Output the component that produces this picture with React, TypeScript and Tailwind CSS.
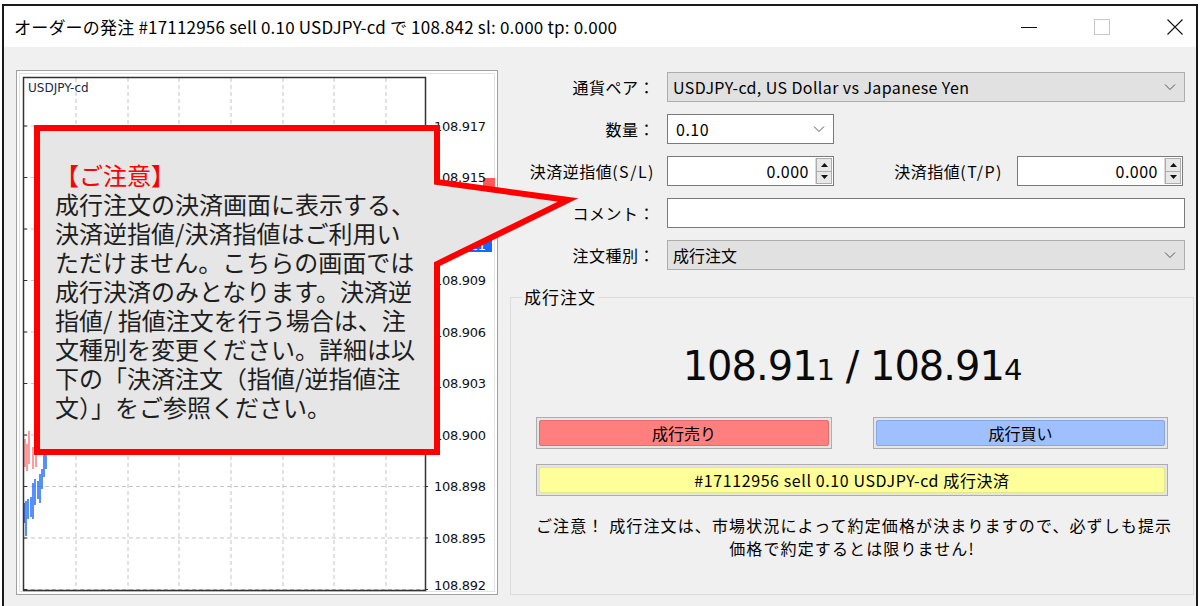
import React from "react";

const levels = [
  "108.917",
  "108.915",
  "108.912",
  "108.909",
  "108.906",
  "108.903",
  "108.900",
  "108.898",
  "108.895",
  "108.892",
];
const gridX = [59, 111, 162, 214, 266, 317, 369];

// candles at the far left edge of the chart (x, y1, y2, colour)
const bars: [number, number, number, string][] = [
  [8, 368, 396, "#ff7a7a"],
  [10, 373, 400, "#ff7a7a"],
  [12, 360, 393, "#ff7a7a"],
  [16, 376, 398, "#ff7a7a"],
  [19, 378, 396, "#ff7a7a"],
  [7, 432, 452, "#0a3fd1"],
  [9, 430, 465, "#1e6bff"],
  [11, 428, 448, "#1e6bff"],
  [14, 426, 446, "#1e6bff"],
  [16, 412, 448, "#1e6bff"],
  [18, 408, 434, "#1e6bff"],
  [21, 410, 428, "#1e6bff"],
  [23, 403, 432, "#1e6bff"],
  [25, 398, 418, "#1e6bff"],
  [27, 384, 406, "#1e6bff"],
  [29, 372, 398, "#1e6bff"],
];

function Chart() {
  return (
    <div className="w-[482px] h-[525px] border border-[#a0a0a0] bg-white shrink-0">
      <svg width="480" height="523" className="block">
        <rect x="2.5" y="2.5" width="475" height="518" fill="none" stroke="#e3e3e3" />
        {levels.map((_, i) => {
          const y = 55 + i * 51.5;
          return (
            <g key={i}>
              <line x1="7" x2="408" y1={y} y2={y} stroke="#c4c4c4" strokeDasharray="4 3" />
              <line x1="6.5" x2="10" y1={y} y2={y} stroke="#333" />
              <line x1="408" x2="411" y1={y} y2={y} stroke="#333" />
            </g>
          );
        })}
        {gridX.map((x) => (
          <line key={x} x1={x} x2={x} y1="7" y2="519" stroke="#c4c4c4" strokeDasharray="4 3" />
        ))}
        {bars.map(([x, a, b, c], i) => (
          <line key={i} x1={x} x2={x} y1={a} y2={b} stroke={c} strokeWidth="1.5" />
        ))}
        <rect x="6.5" y="6.5" width="402" height="513" fill="none" stroke="#333" strokeWidth="1.5" />
        <text x="11" y="21" fontSize="12" fill="#1c2a48" fontFamily="DejaVu Sans, sans-serif">
          USDJPY-cd
        </text>
        <rect x="466" y="107" width="12" height="12" fill="#ff5a5a" />
        <rect x="415" y="167" width="60" height="14" fill="#1a66ff" />
        {levels.map((l, i) => {
          const y = i === 9 ? 519 : 59.5 + i * 51.5;
          return (
            <text
              key={l}
              x="417"
              y={y}
              fontSize="13"
              fill="#111"
              fontFamily="DejaVu Sans, sans-serif"
              letterSpacing="-0.3"
            >
              {l}
            </text>
          );
        })}
        <text x="417" y="178.5" fontSize="13" fill="#fff" fontFamily="DejaVu Sans, sans-serif" letterSpacing="-0.3">
          108.911
        </text>
      </svg>
    </div>
  );
}

function Chevron() {
  return (
    <svg width="12" height="8" viewBox="0 0 12 8" className="shrink-0">
      <polyline points="1,1.5 6,6.5 11,1.5" fill="none" stroke="#555" strokeWidth="1" />
    </svg>
  );
}

function Spin() {
  return (
    <div className="flex flex-col w-[17px] h-full border-l border-[#d9d9d9]">
      <div className="flex-1 bg-[#e8e8e8] border border-[#adadad] flex items-center justify-center">
        <svg width="7" height="4" viewBox="0 0 7 4">
          <polygon points="0,4 3.5,0 7,4" fill="#111" />
        </svg>
      </div>
      <div className="flex-1 bg-[#e8e8e8] border border-t-0 border-[#adadad] flex items-center justify-center">
        <svg width="7" height="4" viewBox="0 0 7 4">
          <polygon points="0,0 3.5,4 7,0" fill="#111" />
        </svg>
      </div>
    </div>
  );
}

function Label({ children, w = "w-[145px]" }: { children: React.ReactNode; w?: string }) {
  return (
    <div className={`${w} text-right text-[16px] tracking-[0.5px] text-black shrink-0 whitespace-nowrap`}>
      {children}
    </div>
  );
}

function Form() {
  return (
    <div className="w-[682px] pt-[2px] flex flex-col">
      <div className="flex items-center h-[30px] mb-[12px]">
        <Label>通貨ペア：</Label>
        <div className="ml-[12px] w-[518px] h-full bg-[#e1e1e1] border border-[#adadad] flex items-center pl-[5px] pr-[8px] text-[16px] tracking-[0.4px]">
          <span className="flex-1">USDJPY-cd, US Dollar vs Japanese Yen</span>
          <Chevron />
        </div>
      </div>
      <div className="flex items-center h-[30px] mb-[12px]">
        <Label>数量：</Label>
        <div className="ml-[12px] w-[167px] h-full bg-white border border-[#7a7a7a] flex items-center pl-[8px] pr-[8px] text-[16px] tracking-[0.5px]">
          <span className="flex-1">0.10</span>
          <Chevron />
        </div>
      </div>
      <div className="flex items-center h-[30px] mb-[12px]">
        <Label>
          決済逆指値<span className="tracking-[1.5px]">(S/L)</span>
        </Label>
        <div className="ml-[12px] w-[167px] h-full bg-white border border-[#7a7a7a] flex items-stretch text-[16px] tracking-[0.5px]">
          <span className="flex-1 text-right pr-[6px] self-center">0.000</span>
          <div className="py-[1px] pr-[1px]">
            <Spin />
          </div>
        </div>
        <Label w="w-[169px]">
          決済指値<span className="tracking-[1.5px]">(T/P)</span>
        </Label>
        <div className="ml-[14px] w-[166px] h-full bg-white border border-[#7a7a7a] flex items-stretch text-[16px] tracking-[0.5px]">
          <span className="flex-1 text-right pr-[6px] self-center">0.000</span>
          <div className="py-[1px] pr-[1px]">
            <Spin />
          </div>
        </div>
      </div>
      <div className="flex items-center h-[30px] mb-[12px]">
        <Label>コメント：</Label>
        <div className="ml-[12px] w-[518px] h-full bg-white border border-[#7a7a7a]" />
      </div>
      <div className="flex items-center h-[30px]">
        <Label>注文種別：</Label>
        <div className="ml-[12px] w-[518px] h-full bg-[#e1e1e1] border border-[#adadad] flex items-center pl-[5px] pr-[8px] text-[16px]">
          <span className="flex-1">成行注文</span>
          <Chevron />
        </div>
      </div>

      <fieldset className="mt-[15px] w-[682px] h-[310px] border border-[#dcdcdc] px-[25px]">
        <legend className="ml-[-14px] px-[2px] text-[17px] leading-[24px] tracking-[1px] text-black">成行注文</legend>
        <div className="mt-[34px] h-[46px] flex items-baseline justify-center text-[#0a0a0a] font-['DejaVu_Sans',sans-serif] tracking-[-1px]">
          <span className="text-[40px] leading-[46px]">108.91</span>
          <span className="text-[29px]">1</span>
          <span className="text-[40px] leading-[46px]">&nbsp;/&nbsp;108.91</span>
          <span className="text-[29px]">4</span>
        </div>
        <div className="mt-[28px] flex gap-[41px]">
          <div className="w-[296px] h-[32px] border border-[#adadad] bg-[#e5e5e5] p-[2px]">
            <div className="h-full rounded-[2px] bg-[#ff7f7f] border border-[#e86a6a] flex items-center justify-center text-[16px] text-black">
              成行売り
            </div>
          </div>
          <div className="w-[295px] h-[32px] border border-[#adadad] bg-[#e5e5e5] p-[2px]">
            <div className="h-full rounded-[2px] bg-[#a0bfff] border border-[#86a6ea] flex items-center justify-center text-[16px] text-black">
              成行買い
            </div>
          </div>
        </div>
        <div className="mt-[15px] w-[632px] h-[32px] border border-[#adadad] bg-[#e5e5e5] p-[2px]">
          <div className="h-full rounded-[2px] bg-[#ffff99] border border-[#e6e68a] flex items-center justify-center text-[16px] tracking-[0.6px] text-black">
            #17112956 sell 0.10 USDJPY-cd 成行決済
          </div>
        </div>
        <div className="mt-[18px] w-[632px] text-center text-[16px] leading-[23px] tracking-[0.07em] text-black whitespace-nowrap">
          ご注意！ 成行注文は、市場状況によって約定価格が決まりますので、必ずしも提示
          <br />
          価格で約定するとは限りません!
        </div>
      </fieldset>
    </div>
  );
}

function TitleBar() {
  return (
    <div className="h-[41px] bg-white flex items-center pl-[10px] shrink-0">
      <div className="flex-1 text-[17px] tracking-[0.2px] text-black whitespace-nowrap">
        オーダーの発注 #17112956 sell 0.10 USDJPY-cd で 108.842 sl: 0.000 tp: 0.000
      </div>
      <div className="flex items-center gap-[57px] mr-[13px]">
        <svg width="16" height="16" viewBox="0 0 16 16">
          <line x1="0" x2="16" y1="8.5" y2="8.5" stroke="#111" />
        </svg>
        <svg width="16" height="16" viewBox="0 0 16 16">
          <rect x="0.5" y="0.5" width="15" height="15" fill="none" stroke="#c8c8c8" />
        </svg>
        <svg width="16" height="16" viewBox="0 0 16 16">
          <path d="M0.5 0.5 L15.5 15.5 M15.5 0.5 L0.5 15.5" stroke="#111" strokeWidth="1.1" />
        </svg>
      </div>
    </div>
  );
}

function Callout() {
  return (
    <>
      <svg width="1202" height="606" className="absolute left-0 top-0 pointer-events-none">
        <path
          d="M37 128 H437 V182 L568 200 L437 264 V452 H37 Z"
          fill="#e6e6e6"
          stroke="#ff0000"
          strokeWidth="6"
          strokeLinejoin="miter"
        />
      </svg>
      <div className="absolute left-[55px] top-[160px] text-[24px] leading-[29px] text-[#1e1e1e] whitespace-nowrap">
        <div className="text-[#ff0000]">【ご注意】</div>
        <div>成行注文の決済画面に表示する、</div>
        <div>決済逆指値/決済指値はご利用い</div>
        <div>ただけません。こちらの画面では</div>
        <div>成行決済のみとなります。決済逆</div>
        <div>指値/ 指値注文を行う場合は、注</div>
        <div>文種別を変更ください。詳細は以</div>
        <div>下の「決済注文（指値/逆指値注</div>
        <div>文）」をご参照ください。</div>
      </div>
    </>
  );
}

export default function App() {
  return (
    <div className="relative w-[1202px] h-[606px] overflow-hidden bg-white pt-[4px] pl-[2px] pr-[4px] font-['Noto_Sans_CJK_JP',sans-serif]">
      <div className="h-[620px] border-2 border-b-0 border-[#1a1a1a] flex flex-col">
        <TitleBar />
        <div className="flex-1 bg-[#f0f0f0] flex pt-[23px] pl-[12px] gap-[12px]">
          <Chart />
          <Form />
        </div>
      </div>
      <Callout />
    </div>
  );
}
